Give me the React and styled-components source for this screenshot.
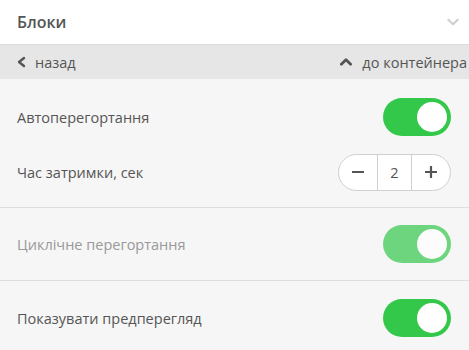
import styled, { createGlobalStyle } from 'styled-components';

const Global = createGlobalStyle`
  body {
    margin: 0;
    background: #f6f6f6;
    font-family: "Open Sans", "Noto Sans", sans-serif;
  }
`;

const Panel = styled.div`
  width: 469px;
  height: 350px;
  overflow: hidden;
  background: #f6f6f6;
`;

const Header = styled.div`
  height: 44px;
  display: flex;
  align-items: center;
  justify-content: space-between;
  padding: 0 9px 0 17px;
  background: #fff;
  border-bottom: 1px solid #dcdcdc;
`;

const Title = styled.div`
  font-size: 16px;
  font-weight: 600;
  color: #555;
`;

const NavBar = styled.div`
  height: 34px;
  display: flex;
  align-items: center;
  justify-content: space-between;
  padding: 0 2px 0 16px;
  background: #e6e6e6;
  white-space: nowrap;
`;

const NavLink = styled.div`
  display: flex;
  align-items: center;
  flex-shrink: 0;
  gap: ${(p) => p.$gap || 7}px;
  font-size: 14.5px;
  color: #555;
`;

const Section = styled.div`
  padding: ${(p) => p.$pad || '0'};
  border-bottom: ${(p) => (p.$last ? 'none' : '1px solid #dedede')};
`;

const Row = styled.div`
  height: ${(p) => p.$h || 54}px;
  display: flex;
  align-items: center;
  justify-content: space-between;
  padding: 0 18px 0 17px;
`;

const Label = styled.div`
  font-size: 14.5px;
  color: ${(p) => (p.$muted ? '#999' : '#555')};
`;

const Toggle = styled.div`
  width: 68px;
  height: 38px;
  border-radius: 19px;
  background: #34c84a;
  opacity: ${(p) => (p.$disabled ? 0.7 : 1)};
  display: flex;
  align-items: center;
  justify-content: flex-end;
  padding: 0 4px;
  box-sizing: border-box;
`;

const Knob = styled.div`
  width: 30px;
  height: 30px;
  border-radius: 50%;
  background: #fff;
`;

const Stepper = styled.div`
  width: 113px;
  height: 37px;
  display: flex;
  border: 1px solid #cfcfcf;
  border-radius: 19px;
  background: #fff;
  box-sizing: border-box;
  overflow: hidden;
`;

const StepBtn = styled.div`
  width: 38px;
  display: flex;
  align-items: center;
  justify-content: center;
`;

const StepValue = styled.div`
  flex: 1;
  display: flex;
  align-items: center;
  justify-content: center;
  border-left: 1px solid #cfcfcf;
  border-right: 1px solid #cfcfcf;
  font-size: 14.5px;
  color: #555;
`;

const Chevron = ({ dir, color = '#555', size = 12, stroke = 2.4 }) => {
  const d = {
    left: 'M8 2 L3 6 L8 10',
    up: 'M2 8 L6 4 L10 8',
    down: 'M2 4 L6 8 L10 4',
  }[dir];
  return (
    <svg width={size} height={size} viewBox="0 0 12 12">
      <path d={d} fill="none" stroke={color} strokeWidth={stroke} strokeLinecap="round" strokeLinejoin="round" />
    </svg>
  );
};

const Sign = ({ plus }) => (
  <svg width="14" height="14" viewBox="0 0 14 14">
    <path d="M1 7 H13" stroke="#555" strokeWidth="2.2" />
    {plus && <path d="M7 1 V13" stroke="#555" strokeWidth="2.2" />}
  </svg>
);

const Switch = ({ disabled }) => (
  <Toggle $disabled={disabled}>
    <Knob />
  </Toggle>
);

export default function App() {
  return (
    <>
      <Global />
      <Panel>
        <Header>
          <Title>Блоки</Title>
          <Chevron dir="down" color="#cfcfcf" size={14} stroke={1.8} />
        </Header>
        <NavBar>
          <NavLink>
            <Chevron dir="left" />
            назад
          </NavLink>
          <NavLink $gap={9}>
            <Chevron dir="up" size={14} />
            до контейнера
          </NavLink>
        </NavBar>
        <Section $pad="11px 0 7px">
          <Row $h={54}>
            <Label>Автоперегортання</Label>
            <Switch />
          </Row>
          <Row $h={56}>
            <Label>Час затримки, сек</Label>
            <Stepper>
              <StepBtn><Sign /></StepBtn>
              <StepValue>2</StepValue>
              <StepBtn><Sign plus /></StepBtn>
            </Stepper>
          </Row>
        </Section>
        <Section $pad="9px 0 9px">
          <Row $h={54}>
            <Label $muted>Циклічне перегортання</Label>
            <Switch disabled />
          </Row>
        </Section>
        <Section $last $pad="10px 0">
          <Row $h={54}>
            <Label>Показувати предперегляд</Label>
            <Switch />
          </Row>
        </Section>
      </Panel>
    </>
  );
}
